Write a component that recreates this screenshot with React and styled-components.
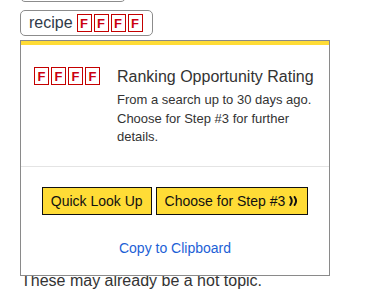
import React from "react";
import styled, { createGlobalStyle } from "styled-components";

const GlobalStyle = createGlobalStyle`
  body {
    margin: 0;
    background: #fff;
    font-family: "Liberation Sans", Arial, sans-serif;
    color: #333;
  }
`;

const Page = styled.div`
  padding: 0 20px;
  overflow: hidden;
  height: 295px;
`;

const TermList = styled.div`
  display: flex;
  flex-direction: column;
  align-items: flex-start;
  gap: 8px;
  margin-top: -24px;
`;

const TermItem = styled.div`
  position: relative;
`;

const Chip = styled.div`
  display: flex;
  align-items: center;
  gap: 4px;
  box-sizing: border-box;
  width: ${(p) => (p.$width ? `${p.$width}px` : "auto")};
  height: 26px;
  padding: 0 9px 0 8px;
  border: 1px solid #8c8c8c;
  border-radius: 5px;
  font-size: 16px;
  color: #2f3a48;
`;

const Grades = styled.span`
  display: inline-flex;
  gap: 2px;
`;

const Grade = styled.span`
  display: inline-flex;
  align-items: center;
  justify-content: center;
  box-sizing: border-box;
  width: 15px;
  height: 18px;
  border: 1px solid #c40000;
  color: #cc0010;
  font-weight: bold;
  font-size: 13px;
  line-height: 1;
`;

const Popup = styled.div`
  position: absolute;
  top: calc(100% + 4px);
  left: 0;
  z-index: 2;
  box-sizing: border-box;
  width: 310px;
  background: #fff;
  border: 1px solid #8a8a8a;
  box-shadow: inset 0 4px 0 #ffdc36;
`;

const Summary = styled.div`
  display: flex;
  gap: 17px;
  padding: 26px 13px 19px 13px;
  border-bottom: 1px solid #e4e4e4;
`;

const Info = styled.div`
  flex: 1;
`;

const Title = styled.div`
  font-size: 16px;
  line-height: 20px;
  color: #333;
`;

const Description = styled.p`
  margin: 4px 0 0;
  font-size: 13px;
  line-height: 18.5px;
  color: #333;
`;

const Actions = styled.div`
  display: flex;
  flex-direction: column;
  align-items: center;
  padding: 20px 0 19px;
`;

const ButtonRow = styled.div`
  display: flex;
  gap: 4px;
`;

const Button = styled.button`
  display: inline-flex;
  align-items: center;
  gap: 4px;
  box-sizing: border-box;
  height: 28px;
  padding: 0 8px;
  border: 1px solid #111;
  border-radius: 0;
  background: #ffdc36;
  color: #111;
  font-family: "Liberation Sans", Arial, sans-serif;
  font-size: 14px;
  cursor: pointer;
`;

const CopyLink = styled.a`
  margin-top: 25px;
  font-size: 14px;
  line-height: 16px;
  color: #1d5fd6;
  text-decoration: none;
  cursor: pointer;
`;

const Note = styled.p`
  margin: 236px 0 0 1px;
  font-size: 16px;
  line-height: 18px;
  color: #333;
`;

function GradeBoxes({ grades }) {
  return (
    <Grades>
      {grades.map((g, i) => (
        <Grade key={i}>{g}</Grade>
      ))}
    </Grades>
  );
}

function Chevrons() {
  return (
    <svg width="10" height="10" viewBox="0 0 10 10" aria-hidden="true">
      <path
        d="M1.3 1 Q4.2 5 1.3 9 M5.6 1 Q8.5 5 5.6 9"
        fill="none"
        stroke="#111"
        strokeWidth="2"
        strokeLinecap="round"
      />
    </svg>
  );
}

export default function App() {
  const grades = ["F", "F", "F", "F"];
  return (
    <>
      <GlobalStyle />
      <Page>
        <TermList>
          {/* previous term, scrolled mostly out of view */}
          <TermItem>
            <Chip $width={106} />
          </TermItem>
          <TermItem>
            <Chip>
              recipe
              <GradeBoxes grades={grades} />
            </Chip>
            <Popup>
              <Summary>
                <GradeBoxes grades={grades} />
                <Info>
                  <Title>Ranking Opportunity Rating</Title>
                  <Description>
                    From a search up to 30 days ago. Choose for Step #3 for
                    further details.
                  </Description>
                </Info>
              </Summary>
              <Actions>
                <ButtonRow>
                  <Button>Quick Look Up</Button>
                  <Button>
                    Choose for Step #3 <Chevrons />
                  </Button>
                </ButtonRow>
                <CopyLink>Copy to Clipboard</CopyLink>
              </Actions>
            </Popup>
          </TermItem>
        </TermList>
        <Note>These may already be a hot topic.</Note>
      </Page>
    </>
  );
}
